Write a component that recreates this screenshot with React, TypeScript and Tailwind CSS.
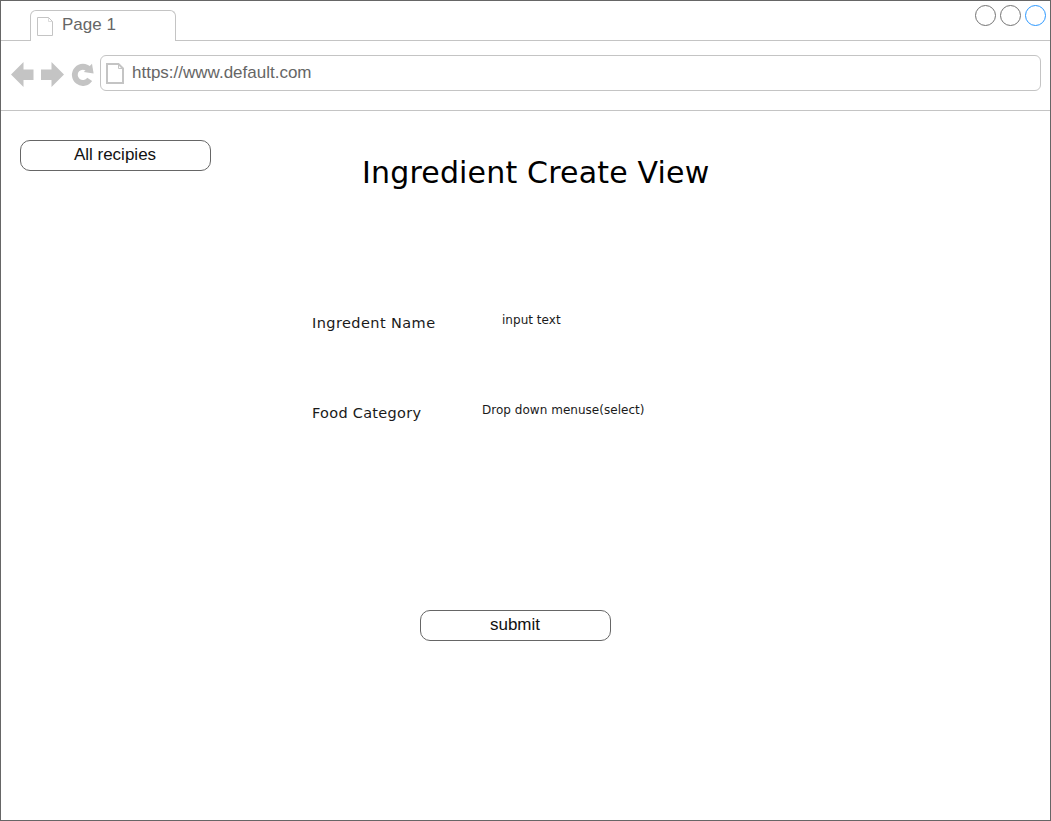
import React from "react";

function PageIcon({ className, thick }: { className: string; thick?: boolean }) {
  return thick ? (
    <svg className={className} viewBox="0 0 18 21" fill="none" stroke="#c4c4c4">
      <path d="M1 1H12.5L17 5.5V20H1Z" strokeWidth="2" />
      <path d="M12.5 1V5.5H17" strokeWidth="1" />
    </svg>
  ) : (
    <svg className={className} viewBox="0 0 16 19" fill="none" stroke="#c4c4c4">
      <path d="M.5 .5H11.5L15.5 4.5V18.5H.5Z" />
      <path d="M11.5 .5V4.5H15.5" strokeOpacity=".6" />
    </svg>
  );
}

function ActionButton({ children }: { children: React.ReactNode }) {
  return (
    <button className="flex h-[31px] w-[191px] justify-center rounded-[10px] border border-[#666] bg-white pr-px text-[17px] leading-[27px] text-[#111]">
      {children}
    </button>
  );
}

function TabStrip() {
  return (
    <div className="flex h-10">
      <div className="w-[29px] border-b border-[#c4c4c4]" />
      <div className="mt-[9px] flex w-[146px] rounded-t-[6px] border-x border-t border-[#c4c4c4] pl-1.5">
        <PageIcon className="mt-1.5 h-[19px] w-4" />
        <span className="ml-[9px] text-[17px] leading-7 text-[#666]">Page 1</span>
      </div>
      <div className="flex flex-1 justify-end gap-1 border-b border-[#c4c4c4] pt-1 pr-1">
        <span className="size-[21px] rounded-full border border-[#737373]" />
        <span className="size-[21px] rounded-full border border-[#737373]" />
        <span className="size-[21px] rounded-full border border-[#2b98ff]" />
      </div>
    </div>
  );
}

function AddressBar() {
  return (
    <div className="flex h-[70px] border-b border-[#c4c4c4] pt-3.5 pr-[9px] pl-2.5">
      <svg className="mt-[7px] h-[25px] w-[89px] shrink-0" viewBox="0 0 89 25" fill="#c4c4c4">
        <path d="M0 12.5L12.5 0V7.5H22.5V18H12.5V25Z" />
        <path d="M53 12.5L40.5 0V7.5H30V18H40.5V25Z" />
        <path d="M78.7 17.3A8.1 8.1 0 1 1 77.9 7.4" fill="none" stroke="#c4c4c4" strokeWidth="5.8" />
        <path d="M81 1.7L82.6 11.6L72.8 9.9Z" />
      </svg>
      <div className="flex h-9 flex-1 rounded-[6px] border border-[#c4c4c4] pl-[5px]">
        <PageIcon className="mt-[7px] h-[21px] w-[18px]" thick />
        <span className="ml-2 text-[17px] leading-[33px] text-[#666]">https://www.default.com</span>
      </div>
    </div>
  );
}

export default function App() {
  return (
    <div className="flex h-[821px] w-[1051px] flex-col overflow-hidden border border-[#666] bg-white font-['Liberation_Sans',sans-serif]">
      <TabStrip />
      <AddressBar />
      <main className="flex-1 pt-[29px] pl-[19px] text-black">
        <div className="flex h-[160px] items-start">
          <ActionButton>All recipies</ActionButton>
          <h1 className="mt-[13px] ml-[151px] font-['Verdana','DejaVu_Sans',sans-serif] text-[30px] leading-10 tracking-[0.17px] whitespace-nowrap">Ingredient Create View</h1>
        </div>
        <div className="ml-[292px] font-['Verdana','DejaVu_Sans',sans-serif] text-[12px] text-[#1a1a1a]">
          <div className="flex h-[90px] pt-2.5">
            <label className="w-[190px] pt-[3px] text-[14.5px] leading-5 tracking-[0.42px]">Ingredent Name</label>
            <span className="leading-5 tracking-[0.03px]">input text</span>
          </div>
          <div className="flex h-[220px] pt-2.5">
            <label className="w-[170px] pt-[3px] text-[14.5px] leading-5 tracking-[0.28px]">Food Category</label>
            <span className="leading-5 tracking-[0.03px]">Drop down menuse(select)</span>
          </div>
        </div>
        <div className="ml-[400px]">
          <ActionButton>submit</ActionButton>
        </div>
      </main>
    </div>
  );
}
